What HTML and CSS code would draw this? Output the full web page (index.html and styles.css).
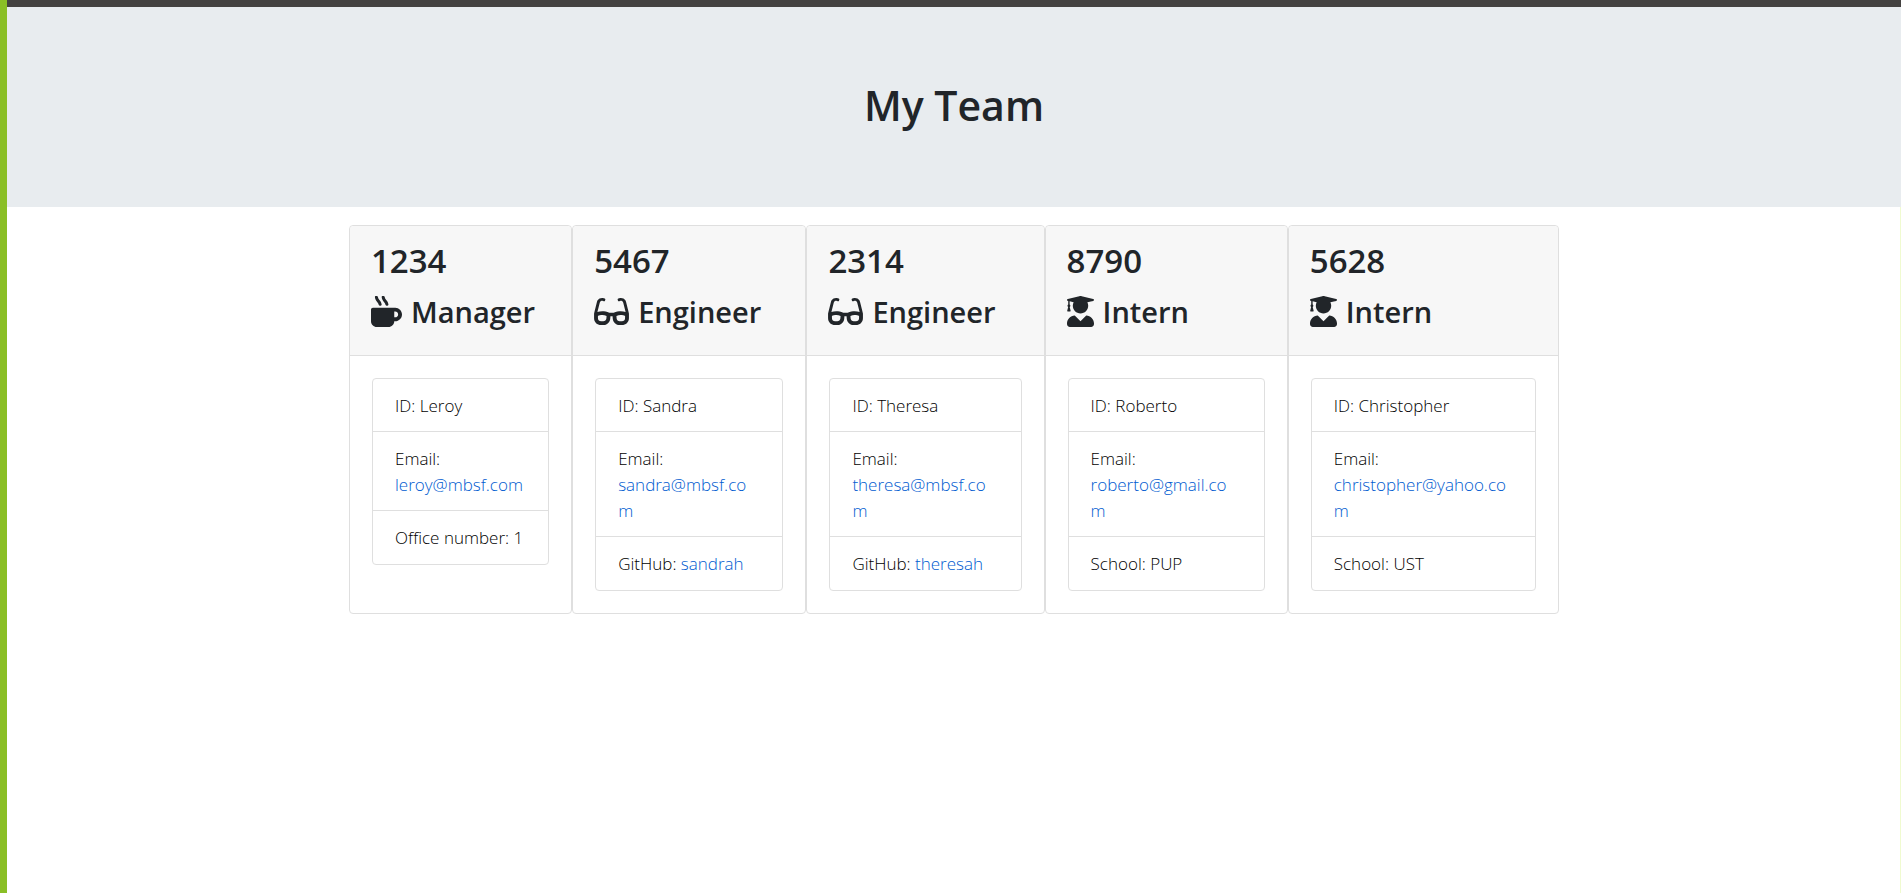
FILE: index.html
```html
<!DOCTYPE html>
<html lang="en">
<head>
<meta charset="utf-8">
<title>My Team</title>
<link rel="stylesheet" href="styles.css">
</head>
<body>
<svg class="sprite" aria-hidden="true">
  <symbol id="mug" viewBox="0 0 512 512"><path d="M127.100 146.500c1.300 7.700 8 13.500 16 13.500h16.500c9.800 0 17.600-8.500 16.300-18-3.800-28.200-16.400-54.200-36.600-74.700-14.400-14.700-23.600-33.300-26.400-53.500C111.800 5.900 105 0 96.800 0H80.400C70.600 0 63 8.500 64.100 18c3.900 31.900 18 61.300 40.600 84.400 12 12.200 19.700 27.500 22.400 44.100zm112 0c1.300 7.700 8 13.500 16 13.500h16.500c9.800 0 17.600-8.500 16.300-18-3.800-28.200-16.400-54.200-36.600-74.700-14.400-14.700-23.600-33.300-26.400-53.500C223.800 5.900 217 0 208.800 0h-16.400c-9.800 0-17.500 8.500-16.300 18 3.900 31.900 18 61.300 40.600 84.400 12 12.200 19.700 27.500 22.400 44.100zM400 192H32c-17.700 0-32 14.300-32 32v192c0 53 43 96 96 96h192c53 0 96-43 96-96h16c61.800 0 112-50.200 112-112s-50.200-112-112-112zm0 160h-16v-96h16c26.500 0 48 21.500 48 48s-21.500 48-48 48z"/></symbol>
  <symbol id="glasses" viewBox="0 0 576 512"><path d="M574.100 280.370L528.750 98.660c-5.910-23.700-21.590-44.050-43-55.810-21.440-11.730-46.970-14.110-70.190-6.330l-15.250 5.080c-8.390 2.790-12.920 11.860-10.120 20.240l5.060 15.180c2.790 8.380 11.850 12.910 20.230 10.120l13.180-4.390c10.870-3.620 23-3.570 33.160 1.730 10.290 5.370 17.570 14.560 20.370 25.820l38.460 153.820c-22.190-6.810-49.790-12.460-81.200-12.460-34.770 0-73.980 7.020-114.850 26.740h-73.180c-40.870-19.740-80.080-26.750-114.860-26.750-31.420 0-59.020 5.650-81.210 12.460l38.460-153.830c2.790-11.250 10.090-20.450 20.380-25.810 10.160-5.300 22.280-5.350 33.150-1.730l13.170 4.390c8.380 2.790 17.440-1.740 20.230-10.120l5.060-15.180c2.800-8.380-1.730-17.450-10.120-20.240l-15.250-5.080c-23.220-7.780-48.750-5.410-70.190 6.330-21.410 11.770-37.090 32.110-43 55.800L1.900 280.370A64.218 64.218 0 0 0 0 295.860v70.250C0 429.010 51.580 480 115.200 480h37.120c60.280 0 110.370-45.940 114.880-105.370l2.930-38.630h35.750l2.930 38.630C313.310 434.060 363.400 480 423.680 480h37.120c63.620 0 115.200-50.990 115.200-113.880v-70.250c0-5.230-.64-10.430-1.900-15.500zm-370.720 89.420c-1.970 25.910-24.400 46.210-51.060 46.210H115.200C86.970 416 64 393.620 64 366.110v-37.540c18.120-6.490 43.420-12.920 72.580-12.920 23.860 0 47.260 4.330 69.930 12.920l-3.130 41.220zM512 366.120c0 27.510-22.970 49.880-51.200 49.880h-37.120c-26.670 0-49.100-20.300-51.060-46.210l-3.130-41.220c22.670-8.590 46.080-12.920 69.950-12.920 29.120 0 54.430 6.440 72.550 12.930v37.540z"/></symbol>
  <symbol id="graduate" viewBox="0 0 448 512"><path d="M319.400 320.600L224 416l-95.400-95.400C57.100 323.700 0 382.200 0 454.400v9.600c0 26.500 21.500 48 48 48h352c26.500 0 48-21.500 48-48v-9.600c0-72.200-57.100-130.700-128.600-133.800zM13.600 79.800l6.400 1.500v58.400c-7 4.200-12 11.500-12 20.300 0 8.400 4.600 15.400 11.100 19.700L3.500 242c-1.700 6.900 2.100 14 7.600 14h41.800c5.500 0 9.300-7.100 7.600-14l-15.600-62.300C51.400 175.400 56 168.400 56 160c0-8.800-5-16.100-12-20.300V87.100l66 15.900c-8.600 17.200-14 36.400-14 57 0 70.700 57.300 128 128 128s128-57.300 128-128c0-20.600-5.300-39.800-14-57l96.300-23.200c18.200-4.400 18.200-27.100 0-31.500l-190.400-46c-13-3.100-26.700-3.100-39.700 0L13.600 48.200c-18.100 4.400-18.100 27.200 0 31.600z"/></symbol>
</svg>
<header class="banner"><h1>My Team</h1></header>
<main class="team">
  <section class="card">
    <div class="card-header">
      <h2>1234</h2>
      <h3><svg class="icon icon-mug"><use href="#mug"/></svg>Manager</h3>
    </div>
    <ul class="details">
      <li>ID: Leroy</li>
      <li>Email: <a class="email" href="mailto:leroy@mbsf.com">leroy@mbsf.com</a></li>
      <li>Office number: 1</li>
    </ul>
  </section>
  <section class="card">
    <div class="card-header">
      <h2>5467</h2>
      <h3><svg class="icon icon-glasses"><use href="#glasses"/></svg>Engineer</h3>
    </div>
    <ul class="details">
      <li>ID: Sandra</li>
      <li>Email: <a class="email" href="mailto:sandra@mbsf.com">sandra@mbsf.co<br>m</a></li>
      <li>GitHub: <a href="https://github.com/sandrah">sandrah</a></li>
    </ul>
  </section>
  <section class="card">
    <div class="card-header">
      <h2>2314</h2>
      <h3><svg class="icon icon-glasses"><use href="#glasses"/></svg>Engineer</h3>
    </div>
    <ul class="details">
      <li>ID: Theresa</li>
      <li>Email: <a class="email" href="mailto:theresa@mbsf.com">theresa@mbsf.co<br>m</a></li>
      <li>GitHub: <a href="https://github.com/theresah">theresah</a></li>
    </ul>
  </section>
  <section class="card">
    <div class="card-header">
      <h2>8790</h2>
      <h3><svg class="icon icon-graduate"><use href="#graduate"/></svg>Intern</h3>
    </div>
    <ul class="details">
      <li>ID: Roberto</li>
      <li>Email: <a class="email" href="mailto:roberto@gmail.com">roberto@gmail.co<br>m</a></li>
      <li>School: PUP</li>
    </ul>
  </section>
  <section class="card">
    <div class="card-header">
      <h2>5628</h2>
      <h3><svg class="icon icon-graduate"><use href="#graduate"/></svg>Intern</h3>
    </div>
    <ul class="details">
      <li>ID: Christopher</li>
      <li>Email: <a class="email" href="mailto:christopher@yahoo.com">christopher@yahoo.co<br>m</a></li>
      <li>School: UST</li>
    </ul>
  </section>
</main>
</body>
</html>
```

FILE: styles.css
```css
* {
  box-sizing: border-box;
}

body {
  margin: 0;
  min-height: 100vh;
  border-left: 7px solid #8abf26;
  background: #fff;
  box-shadow: inset -1px 0 #f0fbd0;
  color: #212529;
  font: 300 17px/26px "Open Sans", "Segoe UI", sans-serif;
}

.sprite {
  position: absolute;
  width: 0;
  height: 0;
}

h1,
h2,
h3 {
  margin: 0;
  font-weight: 600;
}

.banner {
  padding: 75px 16px 79px;
  border-top: 7px solid #444241;
  background: #e8ecef;
  text-align: center;
}

h1 {
  font-size: 41px;
  line-height: 46px;
}

.team {
  display: grid;
  grid-template-columns: 223fr 234fr 238fr 243fr 271fr;
  width: 100%;
  max-width: 1210px;
  margin: 18px auto;
}

.card {
  border: 1px solid #dfdfdf;
  border-radius: 4px;
  background: #fff;
}

.card-header {
  padding: 13px 21px 23px;
  border-bottom: 1px solid #dfdfdf;
  border-radius: 4px 4px 0 0;
  background: #f7f7f7;
}

h2 {
  margin-bottom: 8px;
  font-size: 33px;
  line-height: 44px;
}

h3 {
  display: flex;
  align-items: center;
  gap: 9px;
  font-size: 29px;
  line-height: 41px;
}

.icon {
  flex: none;
  height: 31px;
  fill: currentColor;
}

.icon-mug {
  width: 31px;
}

.icon-glasses {
  width: 35px;
}

.icon-graduate {
  width: 27px;
}

.details {
  margin: 22px;
  padding: 0;
  border: 1px solid #dfdfdf;
  border-radius: 4px;
  color: #000;
  list-style: none;
}

.details li {
  padding: 14px 22px 12px;
  white-space: nowrap;
}

.details li:last-child {
  padding-bottom: 13px;
}

.details li + li {
  border-top: 1px solid #dfdfdf;
}

.email {
  display: block;
}

a {
  color: #005bd0;
  text-decoration: none;
}
```
